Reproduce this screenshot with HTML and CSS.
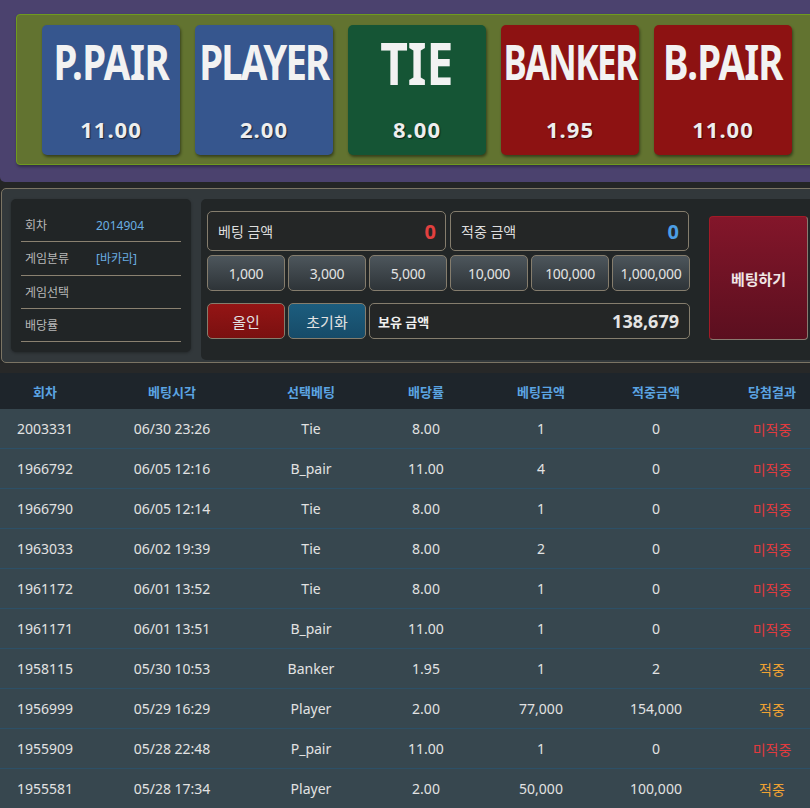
FILE: index.html
```html
<!DOCTYPE html>
<html lang="ko">
<head>
<meta charset="utf-8">
<link rel="stylesheet" href="styles.css">
</head>
<body>
<div class="page">
  <div class="top">
    <div class="board">
      <div class="card blue"><div class="name ppair">P.PAIR</div><div class="odds">11.00</div></div>
      <div class="card blue"><div class="name player">PLAYER</div><div class="odds">2.00</div></div>
      <div class="card green"><div class="name tie">TIE</div><div class="odds">8.00</div></div>
      <div class="card red"><div class="name banker">BANKER</div><div class="odds">1.95</div></div>
      <div class="card red"><div class="name bpair">B.PAIR</div><div class="odds">11.00</div></div>
    </div>
  </div>

  <div class="panel">
    <div class="info">
      <div class="info-row"><span class="lbl">회차</span><span class="val">2014904</span></div>
      <div class="info-row"><span class="lbl">게임분류</span><span class="val">[바카라]</span></div>
      <div class="info-row"><span class="lbl">게임선택</span><span class="val"></span></div>
      <div class="info-row"><span class="lbl">배당률</span><span class="val"></span></div>
    </div>
    <div class="betbox">
      <div class="controls">
        <div class="amounts">
          <div class="field"><span>베팅 금액</span><b class="num red-num">0</b></div>
          <div class="field"><span>적중 금액</span><b class="num blue-num">0</b></div>
        </div>
        <div class="chips">
          <button class="chip">1,000</button>
          <button class="chip">3,000</button>
          <button class="chip">5,000</button>
          <button class="chip">10,000</button>
          <button class="chip">100,000</button>
          <button class="chip">1,000,000</button>
        </div>
        <div class="actions">
          <button class="act allin">올인</button>
          <button class="act reset">초기화</button>
          <div class="field balance"><b class="bal-lbl">보유 금액</b><b class="bal-num">138,679</b></div>
        </div>
      </div>
      <button class="bet">베팅하기</button>
    </div>
  </div>

  <div class="spacer"></div>

  <table class="history">
    <colgroup>
      <col class="c1"><col class="c2"><col class="c3"><col class="c4"><col class="c5"><col class="c6"><col class="c7">
    </colgroup>
    <thead>
      <tr><th>회차</th><th>베팅시각</th><th>선택베팅</th><th>배당률</th><th>베팅금액</th><th>적중금액</th><th>당첨결과</th></tr>
    </thead>
    <tbody>
      <tr><td>2003331</td><td>06/30 23:26</td><td>Tie</td><td>8.00</td><td>1</td><td>0</td><td class="lose">미적중</td></tr>
      <tr><td>1966792</td><td>06/05 12:16</td><td>B_pair</td><td>11.00</td><td>4</td><td>0</td><td class="lose">미적중</td></tr>
      <tr><td>1966790</td><td>06/05 12:14</td><td>Tie</td><td>8.00</td><td>1</td><td>0</td><td class="lose">미적중</td></tr>
      <tr><td>1963033</td><td>06/02 19:39</td><td>Tie</td><td>8.00</td><td>2</td><td>0</td><td class="lose">미적중</td></tr>
      <tr><td>1961172</td><td>06/01 13:52</td><td>Tie</td><td>8.00</td><td>1</td><td>0</td><td class="lose">미적중</td></tr>
      <tr><td>1961171</td><td>06/01 13:51</td><td>B_pair</td><td>11.00</td><td>1</td><td>0</td><td class="lose">미적중</td></tr>
      <tr><td>1958115</td><td>05/30 10:53</td><td>Banker</td><td>1.95</td><td>1</td><td>2</td><td class="win">적중</td></tr>
      <tr><td>1956999</td><td>05/29 16:29</td><td>Player</td><td>2.00</td><td>77,000</td><td>154,000</td><td class="win">적중</td></tr>
      <tr><td>1955909</td><td>05/28 22:48</td><td>P_pair</td><td>11.00</td><td>1</td><td>0</td><td class="lose">미적중</td></tr>
      <tr><td>1955581</td><td>05/28 17:34</td><td>Player</td><td>2.00</td><td>50,000</td><td>100,000</td><td class="win">적중</td></tr>
    </tbody>
  </table>
</div>
</body>
</html>
```

FILE: styles.css
```css
html, body {
  margin: 0;
  padding: 0;
  overflow: hidden;
  background: #242525;
}
body {
  font-family: "Noto Sans", "Noto Sans CJK KR", sans-serif;
  color: #ddd;
}
.page {
  width: 830px;
}

/* top board */
.top {
  background: #4b426e;
  padding: 14px 0 17px 16px;
  border-radius: 0 0 0 5px;
}
.board {
  display: flex;
  gap: 15px;
  background: #627330;
  border: 1px solid #6f9a1f;
  border-radius: 4px;
  padding: 10px 25px 9px 25px;
  box-shadow: 1px 2px 3px rgba(0,0,0,0.35);
}
.card {
  width: 138px;
  height: 130px;
  border-radius: 5px;
  box-shadow: 1px 2px 3px rgba(0,0,0,0.45);
  display: flex;
  flex-direction: column;
  align-items: center;
  color: #f2f2f2;
}
.card.blue { background: #36568e; }
.card.green { background: #155535; }
.card.red { background: #8d1212; }
.name {
  font-family: "Noto Sans", sans-serif;
  font-weight: 700;
  font-size: 48px;
  line-height: 48px;
  height: 48px;
  margin-top: 13px;
  letter-spacing: -2px;
  transform: scaleX(0.8);
  white-space: nowrap;
}
.name.ppair { letter-spacing: -0.5px; }
.name.bpair { letter-spacing: -1px; }
.name.player { letter-spacing: -2.3px; }
.name.banker {
  letter-spacing: -2px;
  transform: scaleX(0.73);
}
.name.tie {
  font-size: 60px;
  line-height: 56px;
  height: 48px;
  margin-top: 9px;
  letter-spacing: 0;
}
.odds {
  margin-top: auto;
  margin-bottom: 13px;
  font-family: "Noto Sans", sans-serif;
  font-weight: 700;
  font-size: 22px;
  line-height: 26px;
  letter-spacing: 1px;
  color: #eee;
  text-shadow: 1px 1px 1px rgba(0,0,0,0.6);
}

/* middle panel */
.panel {
  margin-top: 6px;
  margin-left: 1px;
  display: flex;
  align-items: flex-start;
  gap: 10px;
  background: #32383b;
  border: 1px solid #7b7464;
  border-radius: 5px;
  padding: 10px 0 2px 9px;
}
.info {
  width: 160px;
  background: #212526;
  border-radius: 5px;
  padding: 10px 10px 10px 10px;
  box-shadow: 0 1px 3px rgba(0,0,0,0.3);
}
.info-row {
  display: flex;
  align-items: center;
  height: 32.3px;
  border-bottom: 1px solid #8a8170;
  font-size: 12px;
  padding-left: 4px;
}
.lbl {
  width: 71px;
  color: #b8b8b8;
}
.val {
  color: #69aee2;
}
.betbox {
  display: flex;
  align-items: flex-start;
  background: #222627;
  border-radius: 5px;
  padding: 12px 0 20px 6px;
  width: 610px;
}
.controls {
  width: 483px;
  display: flex;
  flex-direction: column;
}
.amounts {
  display: flex;
  gap: 4px;
}
.field {
  box-sizing: border-box;
  display: flex;
  align-items: center;
  justify-content: space-between;
  border: 1px solid #857d6d;
  border-radius: 5px;
  background: #242626;
  color: #ddd;
  font-size: 14px;
}
.amounts .field {
  width: 239px;
  height: 40px;
  padding: 0 9px 0 10px;
}
.num {
  font-size: 20px;
  font-weight: 700;
}
.red-num { color: #e2403f; }
.blue-num { color: #4c9ee4; }
.chips {
  display: flex;
  gap: 3px;
  margin-top: 4px;
}
.chip, .act {
  box-sizing: border-box;
  width: 78px;
  height: 36px;
  border: 1px solid #857d6d;
  border-radius: 5px;
  font-family: "Noto Sans", "Noto Sans CJK KR", sans-serif;
  font-size: 14px;
  color: #e2e2e2;
  padding: 0;
}
.chip {
  background: linear-gradient(#4d565c, #2e3438);
  letter-spacing: -0.3px;
}
.actions {
  display: flex;
  gap: 3px;
  margin-top: 12px;
}
.act { font-size: 15px; }
.allin { background: linear-gradient(#941515, #7a1010); }
.reset { background: linear-gradient(#1c5d7e, #174b68); }
.balance {
  width: 321px;
  height: 36px;
  padding: 0 10px 0 8px;
}
.bal-lbl {
  font-size: 13px;
  color: #f0f0f0;
}
.bal-num {
  font-size: 18px;
  color: #e4e4e4;
}
.bet {
  box-sizing: border-box;
  margin: 5px 0 0 19px;
  width: 99px;
  height: 124px;
  border: 1px solid #a21a26;
  border-bottom-color: #8a7a70;
  border-right-color: #8a7a70;
  border-radius: 4px;
  background: linear-gradient(#83162a, #5b0f1f);
  color: #f0e6e6;
  font-family: "Noto Sans", "Noto Sans CJK KR", sans-serif;
  font-size: 15px;
  font-weight: 700;
  padding: 0;
}

.spacer {
  height: 10px;
  background: #272828;
}

/* table */
.history {
  width: 830px;
  border-collapse: collapse;
  table-layout: fixed;
}
.c1 { width: 90px; }
.c2 { width: 164px; }
.c3 { width: 114px; }
.c4 { width: 116px; }
.c5 { width: 114px; }
.c6 { width: 116px; }
.c7 { width: 116px; }
.history th {
  background: #1e252b;
  color: #5ba4e2;
  font-size: 13px;
  font-weight: 700;
  height: 36px;
  padding: 0;
  text-align: center;
}
.history td {
  background: #37474f;
  color: #e2e2e2;
  font-size: 14px;
  height: 39px;
  padding: 0;
  text-align: center;
  border-bottom: 1px solid #2c5068;
}
.history td.lose { color: #e23a3e; }
.history td.win { color: #f0a232; }
```
